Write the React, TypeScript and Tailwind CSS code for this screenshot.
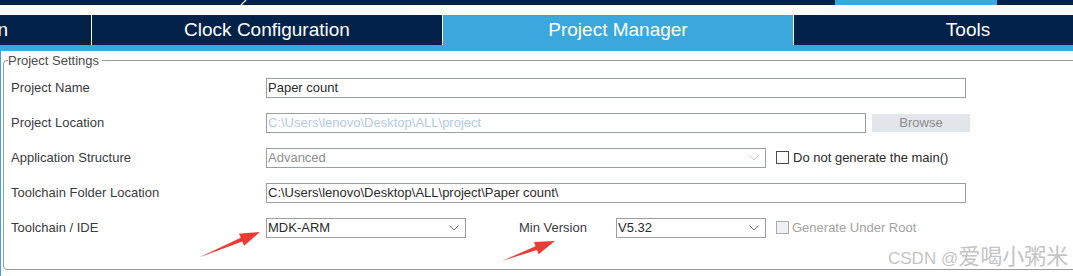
import React from "react";

const font = "font-['Liberation_Sans',Arial,sans-serif]";

function Chevron({ dim }: { dim?: boolean }) {
    return (
        <svg width="10" height="6" viewBox="0 0 10 6" className="shrink-0">
            <path d="M0.5 0.5 L5 5 L9.5 0.5" fill="none" stroke={dim ? "#c4c8cc" : "#6b6f75"} strokeWidth="1" />
        </svg>
    );
}

function Field({ width, value, tone = "dark" }: { width: string; value: string; tone?: "dark" | "blue" }) {
    return (
        <div className={`${width} h-[20px] border border-[#9a9da1] flex items-center pl-[1px] text-[13px] whitespace-nowrap overflow-hidden ${tone === "blue" ? "text-[#b4c9e4]" : "text-[#2b2b2b]"}`}>
            {value}
        </div>
    );
}

function Select({ width, value, dim }: { width: string; value: string; dim?: boolean }) {
    return (
        <div className={`${width} h-[20px] border border-[#9a9da1] flex items-center justify-between pl-[1px] pr-[6px] text-[13px] ${dim ? "text-[#8e8e8e]" : "text-[#2b2b2b]"}`}>
            <span>{value}</span>
            <Chevron dim={dim} />
        </div>
    );
}

function Row({ label, children }: { label: string; children: React.ReactNode }) {
    return (
        <div className="h-[35px] flex items-center">
            <div className="w-[255px] shrink-0 text-[13px] text-[#3a3a42]">{label}</div>
            {children}
        </div>
    );
}

// Arrow polygon from tail to tip
function arrowPoints(tx: number, ty: number, px: number, py: number) {
    const dx = px - tx;
    const dy = py - ty;
    const len = Math.hypot(dx, dy);
    const ux = dx / len;
    const uy = dy / len;
    const nx = -uy;
    const ny = ux;
    const bx = px - ux * 20;
    const by = py - uy * 20;
    const pts = [
        [tx, ty],
        [bx - nx * 2, by - ny * 2],
        [bx - nx * 6.5, by - ny * 6.5],
        [px, py],
        [bx + nx * 6.5, by + ny * 6.5],
        [bx + nx * 2, by + ny * 2],
    ];
    return pts.map((p) => p.join(",")).join(" ");
}

export default function App() {
    return (
        <div className={`w-[1073px] h-[276px] bg-white overflow-hidden relative ${font}`}>
            {/* top strip */}
            <div className="h-[5px] flex">
                <div className="w-[240px] bg-[#03224a]" />
                <svg width="8" height="5" className="bg-[#03224a] shrink-0">
                    <path d="M1 5 L6 0" stroke="#ffffff" strokeWidth="1.2" />
                </svg>
                <div className="w-[587px] bg-[#03224a]" />
                <div className="w-[162px] bg-[#3aa8dc]" />
                <div className="flex-1 bg-[#03224a]" />
            </div>
            <div className="h-[10px]" />

            {/* tabs */}
            <div className="h-[30px] flex text-white text-[19px] whitespace-nowrap">
                <div className="w-[91px] shrink-0 bg-[#03224a] flex items-center justify-end pr-[83px] overflow-hidden">
                    Pinout &amp; Configuration
                </div>
                <div className="w-[351px] shrink-0 bg-[#03224a] border-l border-white flex items-center justify-center">
                    Clock Configuration
                </div>
                <div className="w-[351px] shrink-0 bg-[#3aa8dc] border-l border-white flex items-center justify-center">
                    Project Manager
                </div>
                <div className="w-[349px] shrink-0 bg-[#03224a] border-l border-white flex items-center justify-center">
                    Tools
                </div>
            </div>
            <div className="h-[6px] bg-[#3aa8dc]" />

            {/* content */}
            <div className="h-[225px] border-l border-[#3aa8dc] pl-[2px] pt-[2px]">
                <fieldset className="w-[1100px] border border-[#9a9a9a] rounded-l-[4px] pl-[5px] pb-[24px]">
                    <legend className="text-[13px] leading-[15px] text-[#4a4a4a] ml-[-1px] pr-[3px]">Project Settings</legend>
                    <div className="pl-[2px] pt-[2px]">
                        <Row label="Project Name">
                            <Field width="w-[700px]" value="Paper count" />
                        </Row>
                        <Row label="Project Location">
                            <Field width="w-[600px]" value="C:\Users\lenovo\Desktop\ALL\project" tone="blue" />
                            <div className="ml-[6px] w-[98px] h-[18px] bg-[#e2e5e9] text-[#8a8a8a] text-[13px] flex items-center justify-center">
                                Browse
                            </div>
                        </Row>
                        <Row label="Application Structure">
                            <Select width="w-[500px]" value="Advanced" dim />
                            <div className="ml-[10px] w-[13px] h-[13px] border border-[#4a4a4a] bg-white" />
                            <span className="ml-[4px] text-[13px] text-[#2b2b2b]">Do not generate the main()</span>
                        </Row>
                        <Row label="Toolchain Folder Location">
                            <Field width="w-[700px]" value="C:\Users\lenovo\Desktop\ALL\project\Paper count\" />
                        </Row>
                        <Row label="Toolchain / IDE">
                            <Select width="w-[200px]" value="MDK-ARM" />
                            <div className="ml-[53px] w-[97px] text-[13px] text-[#3a3a42]">Min Version</div>
                            <Select width="w-[150px]" value="V5.32" />
                            <div className="ml-[10px] w-[13px] h-[13px] border border-[#a9adb2] bg-[#eef0f2]" />
                            <span className="ml-[3px] text-[13px] text-[#a3a3a3]">Generate Under Root</span>
                        </Row>
                    </div>
                </fieldset>
            </div>

            {/* red annotation arrows */}
            <svg className="absolute inset-0 pointer-events-none" width="1073" height="276">
                <polygon points={arrowPoints(199, 257.5, 260, 232)} fill="#ee3a35" />
                <polygon points={arrowPoints(502, 261, 555, 241)} fill="#ee3a35" />
            </svg>

            {/* watermark */}
            <div className="absolute left-[888px] top-[246px] text-[17px] leading-[22px] text-[#c4c4c4] whitespace-nowrap font-['Liberation_Sans','Noto_Sans_CJK_SC',sans-serif]">
                CSDN @<span className="text-[22px]">爱喝小粥米</span>
            </div>
        </div>
    );
}
